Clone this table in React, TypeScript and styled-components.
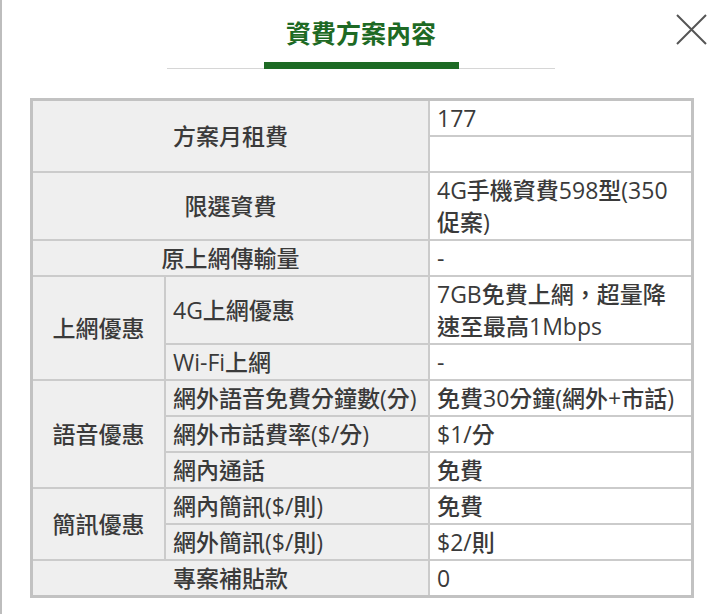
import React from "react";
import styled, { createGlobalStyle } from "styled-components";

const Global = createGlobalStyle`
  html, body { margin: 0; padding: 0; background: #fff; }
  body { font-family: "Open Sans", "Noto Sans CJK TC", sans-serif; }
`;

const Page = styled.div`
  position: relative;
  min-height: 614px;
  box-sizing: border-box;
  border-left: 2px solid #bdbdbd;
  padding-top: 14px;
`;

const Header = styled.header`
  display: flex;
  flex-direction: column;
  align-items: center;
`;

const Title = styled.h1`
  margin: 0;
  font-family: "Noto Sans CJK TC", sans-serif;
  font-size: 25px;
  line-height: 36px;
  font-weight: 700;
  color: #1e6a24;
`;

const Rule = styled.div`
  width: 388px;
  margin-top: 12px;
  display: flex;
  justify-content: center;
  border-bottom: 1px solid #d6d6d6;
`;

const Bar = styled.div`
  width: 195px;
  height: 7px;
  margin-bottom: -1px;
  background: #1d6a24;
`;

const Close = styled.button`
  position: absolute;
  top: 14px;
  right: 13px;
  width: 31px;
  height: 31px;
  padding: 0;
  border: 0;
  background: none;
  display: block;
`;

const Grid = styled.div`
  margin: 29px 0 0 28px;
  width: 664px;
  box-sizing: border-box;
  display: grid;
  grid-template-columns: 131px 262px 261px;
  gap: 2px;
  background: #cbcbcb;
  border: 3px solid #c2c2c2;
`;

const Cell = styled.div<{
  $label?: boolean;
  $center?: boolean;
  $col?: string;
  $row?: string;
}>`
  grid-column: ${(p) => p.$col || "auto"};
  grid-row: ${(p) => p.$row || "auto"};
  background: ${(p) => (p.$label ? "#efefef" : "#ffffff")};
  color: #3a3a3a;
  font-size: 23px;
  font-weight: 500;
  line-height: 32px;
  padding: 1px 7px;
  min-height: 32px;
  display: flex;
  align-items: center;
  justify-content: ${(p) => (p.$center ? "center" : "flex-start")};
  text-align: ${(p) => (p.$center ? "center" : "left")};
  white-space: normal;
`;

type Row =
  | { kind: "wide"; label: string; values: string[] }
  | { kind: "group"; label: string; items: [string, string][] };

const rows: Row[] = [
  { kind: "wide", label: "方案月租費", values: ["177", ""] },
  { kind: "wide", label: "限選資費", values: ["4G手機資費598型(350促案)"] },
  { kind: "wide", label: "原上網傳輸量", values: ["-"] },
  {
    kind: "group",
    label: "上網優惠",
    items: [
      ["4G上網優惠", "7GB免費上網，超量降速至最高1Mbps"],
      ["Wi-Fi上網", "-"],
    ],
  },
  {
    kind: "group",
    label: "語音優惠",
    items: [
      ["網外語音免費分鐘數(分)", "免費30分鐘(網外+市話)"],
      ["網外市話費率($/分)", "$1/分"],
      ["網內通話", "免費"],
    ],
  },
  {
    kind: "group",
    label: "簡訊優惠",
    items: [
      ["網內簡訊($/則)", "免費"],
      ["網外簡訊($/則)", "$2/則"],
    ],
  },
  { kind: "wide", label: "專案補貼款", values: ["0"] },
];

export default function App() {
  const cells: React.ReactNode[] = [];
  let r = 1;
  rows.forEach((row, i) => {
    if (row.kind === "wide") {
      const n = row.values.length;
      cells.push(
        <Cell key={`l${i}`} $label $center $col="1 / 3" $row={`${r} / span ${n}`}>
          {row.label}
        </Cell>
      );
      row.values.forEach((v, j) => {
        cells.push(
          <Cell key={`v${i}-${j}`} $col="3" $row={`${r + j}`}>
            {v || "\u00a0"}
          </Cell>
        );
      });
      r += n;
    } else {
      const n = row.items.length;
      cells.push(
        <Cell key={`g${i}`} $label $center $col="1" $row={`${r} / span ${n}`}>
          {row.label}
        </Cell>
      );
      row.items.forEach(([k, v], j) => {
        cells.push(
          <Cell key={`k${i}-${j}`} $label $col="2" $row={`${r + j}`}>
            {k}
          </Cell>
        );
        cells.push(
          <Cell key={`x${i}-${j}`} $col="3" $row={`${r + j}`}>
            {v}
          </Cell>
        );
      });
      r += n;
    }
  });

  return (
    <>
      <Global />
      <Page>
        <Header>
          <Title>資費方案內容</Title>
          <Rule>
            <Bar />
          </Rule>
        </Header>
        <Close aria-label="close">
          <svg width="31" height="31" viewBox="0 0 31 31">
            <path d="M1 1 L30 30 M30 1 L1 30" stroke="#555" strokeWidth="2" fill="none" />
          </svg>
        </Close>
        <Grid>{cells}</Grid>
      </Page>
    </>
  );
}
